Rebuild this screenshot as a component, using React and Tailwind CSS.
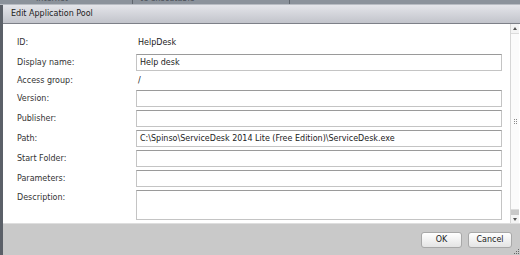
import React from 'react';

const font = { fontFamily: '"DejaVu Sans", Verdana, sans-serif' };

const rows = [
  { label: 'ID:', text: 'HelpDesk', h: 'h-[17px]' },
  { label: 'Display name:', value: 'Help desk' },
  { label: 'Access group:', text: '/', h: 'h-[13px]' },
  { label: 'Version:', value: '' },
  { label: 'Publisher:', value: '' },
  { label: 'Path:', value: 'C:\\Spinso\\ServiceDesk 2014 Lite (Free Edition)\\ServiceDesk.exe' },
  { label: 'Start Folder:', value: '' },
  { label: 'Parameters:', value: '' },
  { label: 'Description:', value: '', area: true },
];

const Field = ({ row }) => {
  if (row.text !== undefined) {
    return (
      <div className={`flex items-center ${row.h}`}>
        <div className="w-[119px] text-[#333]">{row.label}</div>
        <div className="text-[#222] pl-[2px]">{row.text}</div>
      </div>
    );
  }
  return (
    <div className="flex items-start">
      <div className={`w-[119px] text-[#333] ${row.area ? 'pt-[2px]' : 'leading-[17px]'}`}>{row.label}</div>
      <div
        className={`w-[366px] ${row.area ? 'h-[30px]' : 'h-[17px]'} border border-[#c4c4c4] border-t-[#9a9a9a] bg-white px-[3px] leading-[15px] text-[#222] whitespace-nowrap overflow-hidden`}
      >
        {row.value}
      </div>
    </div>
  );
};

const Button = ({ children, w }) => (
  <div
    className={`${w} h-[16px] rounded-[3px] border border-[#a8a8a8] bg-gradient-to-b from-[#ffffff] to-[#e4e4e4] flex items-center justify-center text-[#222]`}
  >
    {children}
  </div>
);

export default function App() {
  return (
    <div className="w-[520px] h-[255px] overflow-hidden flex flex-col bg-white text-[8px]" style={font}>
      {/* background window strip, only the foot of its text shows */}
      <div className="h-[5px] bg-[#8b929b] border-b border-[#b8bcc3] flex overflow-hidden">
        <div className="w-[133px] border-r border-[#5f656d] pl-[36px] leading-[8px] -mt-[5px] text-[#4a5058] whitespace-nowrap">Internet</div>
        <div className="w-[157px] border-r border-[#5f656d] pl-[7px] leading-[8px] -mt-[5px] text-[#4a5058] whitespace-nowrap">te executable</div>
      </div>

      <div className="flex-1 flex border-l-[3px] border-[#5b6068] relative">
        <div className="flex-1 flex flex-col">
          {/* title bar */}
          <div className="h-[19px] flex items-center pl-[8px] bg-gradient-to-b from-[#e4e5ea] to-[#c2c4cb] border-b border-[#7d8088] text-[#222]">
            Edit Application Pool
          </div>

          {/* content */}
          <div className="flex-1 flex bg-white">
            <div className="flex-1 pl-[14px] pt-[10px] flex flex-col gap-[3px]">
              {rows.map((row) => (
                <Field key={row.label} row={row} />
              ))}
            </div>
            {/* scrollbar */}
            <div className="w-[9px] mr-[1px] bg-[#f4f4f4] border-l border-[#d6d6d6] flex flex-col items-center">
              <div className="h-[9px] w-full flex items-center justify-center">
                <div className="w-0 h-0 border-l-[2px] border-r-[2px] border-b-[3px] border-l-transparent border-r-transparent border-b-[#555]" />
              </div>
              <div className="flex-1 w-full bg-[#fbfbfb] border-y border-[#dcdcdc] flex items-center justify-center">
                <div className="grid grid-cols-2 gap-[1px]">
                  {[0, 1, 2, 3, 4, 5].map((i) => (
                    <div key={i} className="w-[1px] h-[1px] bg-[#888]" />
                  ))}
                </div>
              </div>
              <div className="h-[5px] w-full bg-[#c9c9c9]" />
              <div className="h-[8px] w-full flex items-center justify-center">
                <div className="w-0 h-0 border-l-[2px] border-r-[2px] border-t-[3px] border-l-transparent border-r-transparent border-t-[#555]" />
              </div>
            </div>
          </div>

          {/* footer */}
          <div className="h-[32px] bg-[#c9c9c9] border-t border-[#dedede] flex justify-end items-start pt-[8px] pr-[8px] gap-[6px]">
            <Button w="w-[41px]">OK</Button>
            <Button w="w-[44px]">Cancel</Button>
          </div>
        </div>
        {/* resize grip */}
        <div className="absolute right-[1px] bottom-[1px] grid grid-cols-3 gap-[1px]">
          {[0, 1, 2, 3, 4, 5, 6, 7, 8].map((i) => (
            <div key={i} className={`w-[1px] h-[1px] ${[2, 4, 5, 6, 7, 8].includes(i) ? 'bg-[#666]' : 'bg-transparent'}`} />
          ))}
        </div>
      </div>
    </div>
  );
}
